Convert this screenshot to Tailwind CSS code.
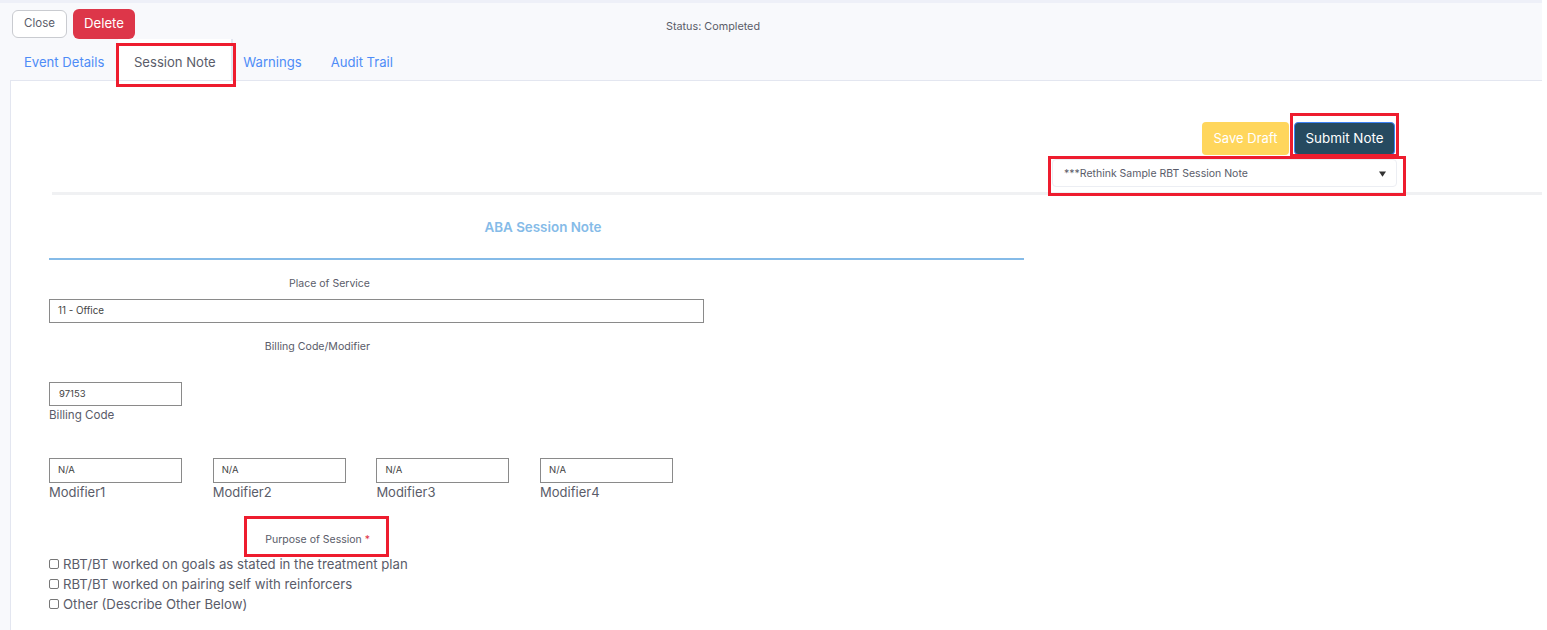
<!DOCTYPE html>
<html>
<head>
<meta charset="utf-8">
<script src="https://cdn.jsdelivr.net/npm/@tailwindcss/browser@4"></script>
</head>
<body class="bg-white font-['Inter','Liberation_Sans',sans-serif] text-[#5a5c69] overflow-hidden">
<div class="relative h-[630px] w-[1542px] overflow-hidden bg-[#f8f9fc]">
  <div class="h-[3px] bg-[#eef0f8]"></div>
  <div class="flex h-[36px] pl-[12px] pt-[7px]">
    <div class="flex gap-[6px]">
      <button class="h-[28px] w-[55px] rounded-[6px] border border-[#c9cbd0] bg-white text-[11.5px] text-[#5a5c69]">Close</button>
      <button class="h-[30px] w-[62px] -mt-px rounded-[6px] bg-[#dd3649] text-[13.2px] text-white">Delete</button>
    </div>
    <div class="ml-[531px] pt-[10px] text-[10.8px] leading-[14px] text-[#5a5c69]">Status: Completed</div>
  </div>
  <div class="flex h-[41px] pl-[10px] text-[13.1px] leading-[20px] text-[#4e8cf7]">
    <div class="px-[14px] pt-[13px]">Event Details</div>
    <div class="h-[41px] w-[115px] bg-white pt-[13px] text-center text-[#5a5c69] border-r-2 border-[#e3e6f0]">Session Note</div>
    <div class="ml-[10px] pt-[13px]">Warnings</div>
    <div class="ml-[29px] pt-[13px]">Audit Trail</div>
  </div>
  <main class="ml-[10px] h-[550px] border-l border-t border-[#e3e6f0] bg-white">
    <div class="h-[113px] pl-[41px]">
      <div class="flex justify-end gap-[5px] pt-[41px] pr-[147px]">
        <button class="h-[33px] w-[87px] rounded-[4px] bg-[#ffd65c] text-[13px] text-white">Save Draft</button>
        <button class="h-[33px] w-[101px] rounded-[4px] border border-[#3b82f6] bg-[#264a60] text-[13.4px] text-white">Submit Note</button>
      </div>
      <div class="ml-[1000px] mt-[4px] flex h-[28px] w-[345px] items-center justify-between rounded-[4px] border border-[#eceef3] pl-[11px] pr-[10px] pt-[1px] text-[10.5px] text-[#5a5c69]">
        <span>***Rethink Sample RBT Session Note</span>
        <svg width="7" height="6" viewBox="0 0 8 6"><path d="M0 0H8L4 6Z" fill="#333"/></svg>
      </div>
      <div class="mt-[5px] h-[3px] bg-[#f0f1f3]"></div>
    </div>
    <section class="ml-[38px] w-[975px]">
      <h2 class="pt-[23px] pl-[13px] text-center text-[13.4px] font-semibold leading-[20px] text-[#85bbe8]">ABA Session Note</h2>
      <div class="mt-[21px] h-[2px] bg-[#85bbe8]"></div>
      <div class="mt-[17px] w-[321px] text-right text-[10.5px] leading-[14px]">Place of Service</div>
      <div class="mt-[8px] flex h-[24px] w-[655px] items-center border border-[#8a8a8a] pl-[8px] text-[9.8px] text-[#444]">11 - Office</div>
      <div class="mt-[17px] w-[321px] text-right text-[10.6px] leading-[14px]">Billing Code/Modifier</div>
      <div class="mt-[28px] flex h-[24px] w-[133px] items-center border border-[#8a8a8a] pl-[9px] text-[9.5px] text-[#444]">97153</div>
      <div class="mt-0 text-[11.6px] leading-[18px]">Billing Code</div>
      <div class="mt-[34px] flex gap-[30.7px]">
        <div class="w-[133px]"><div class="flex h-[25px] items-center border border-[#8a8a8a] pl-[8px] text-[9.5px] text-[#444]">N/A</div><div class="text-[13px] leading-[18px]">Modifier1</div></div>
        <div class="w-[133px]"><div class="flex h-[25px] items-center border border-[#8a8a8a] pl-[8px] text-[9.5px] text-[#444]">N/A</div><div class="text-[13px] leading-[18px]">Modifier2</div></div>
        <div class="w-[133px]"><div class="flex h-[25px] items-center border border-[#8a8a8a] pl-[8px] text-[9.5px] text-[#444]">N/A</div><div class="text-[13px] leading-[18px]">Modifier3</div></div>
        <div class="w-[133px]"><div class="flex h-[25px] items-center border border-[#8a8a8a] pl-[8px] text-[9.5px] text-[#444]">N/A</div><div class="text-[13px] leading-[18px]">Modifier4</div></div>
      </div>
      <div class="mt-[32px] w-[321px] text-right text-[10.5px] leading-[14px]">Purpose of Session <span class="text-[#e03444]">*</span></div>
      <div class="mt-[8px] flex flex-col gap-[1px] text-[13.2px] leading-[19px]">
        <label class="flex items-center gap-[4px]"><span class="-mt-[2px] h-[10px] w-[10px] rounded-[2px] border border-[#777] bg-white"></span>RBT/BT worked on goals as stated in the treatment plan</label>
        <label class="flex items-center gap-[4px]"><span class="-mt-[2px] h-[10px] w-[10px] rounded-[2px] border border-[#777] bg-white"></span>RBT/BT worked on pairing self with reinforcers</label>
        <label class="flex items-center gap-[4px]"><span class="-mt-[2px] h-[10px] w-[10px] rounded-[2px] border border-[#777] bg-white"></span>Other (Describe Other Below)</label>
      </div>
    </section>
  </main>
  <div class="absolute left-[116px] top-[43px] h-[44px] w-[120px] border-[3px] border-[#ee1c2e]"></div>
  <div class="absolute left-[1290px] top-[113px] h-[44px] w-[109px] border-[3px] border-[#ee1c2e]"></div>
  <div class="absolute left-[1048px] top-[156px] h-[40px] w-[358px] border-[3px] border-[#ee1c2e]"></div>
  <div class="absolute left-[244px] top-[516px] h-[41px] w-[145px] border-[3px] border-[#ee1c2e]"></div>
</div>
</body>
</html>
